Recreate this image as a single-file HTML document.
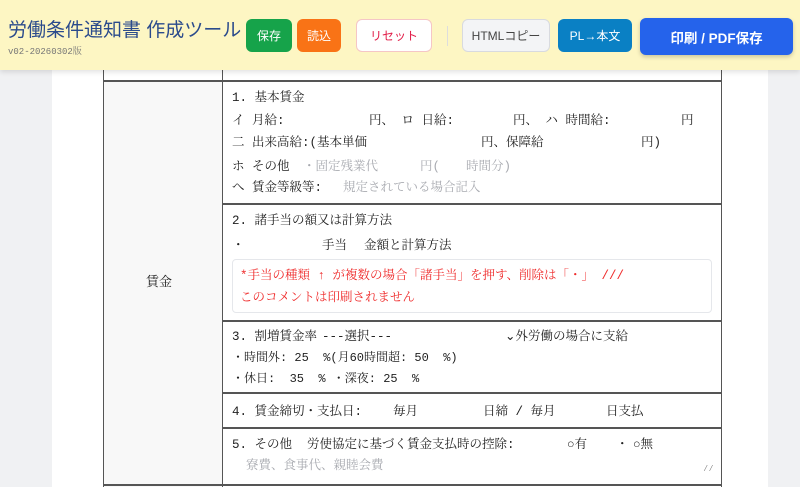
<!DOCTYPE html>
<html><head><meta charset="utf-8"><style>
*{margin:0;padding:0;box-sizing:border-box}
body{width:800px;height:487px;overflow:hidden;background:#f0f1f3;font-family:"Liberation Mono","Noto Serif CJK JP",serif;color:#222;position:relative}
.paper{position:absolute;left:52px;top:0;width:716px;height:487px;background:#fff}
.hdr{position:absolute;left:0;top:0;width:800px;height:70px;background:#fdf6c3;box-shadow:0 2px 5px rgba(0,0,0,.12);z-index:5}
.t{position:absolute;white-space:nowrap}
.btn{position:absolute;border-radius:6px;font-family:"Liberation Sans","Noto Sans CJK JP",sans-serif;font-size:12px;display:flex;align-items:center;justify-content:center;color:#fff}
.v{position:absolute;background:#555;width:1px}
.h{position:absolute;background:#555;height:1px}
.r{position:absolute;font-size:12.5px;white-space:nowrap;line-height:16px;margin-top:2px}
.g{color:#a8aab0}
</style></head><body>
<div class="paper"></div>
<div style="position:absolute;left:104px;top:80px;width:118px;height:407px;background:#f8f8f8"></div>
<div class="v" style="left:103px;top:60px;height:427px"></div>
<div class="v" style="left:222px;top:60px;height:427px"></div>
<div class="v" style="left:721px;top:60px;height:427px"></div>
<div class="h" style="left:103px;top:80px;width:619px;height:2px"></div>
<div class="h" style="left:222px;top:203px;width:500px;height:2px"></div>
<div class="h" style="left:222px;top:320px;width:500px;height:2px"></div>
<div class="h" style="left:222px;top:392px;width:500px;height:2px"></div>
<div class="h" style="left:222px;top:427px;width:500px;height:2px"></div>
<div class="h" style="left:103px;top:484px;width:619px;height:2px"></div>
<div class="r" style="left:146px;top:273px;font-size:13px">賃金</div>

<div class="r" style="left:232px;top:88px">1. 基本賃金</div>
<div class="r" style="left:232px;top:111px">イ 月給:</div>
<div class="r" style="left:369px;top:111px">円、 ロ 日給:</div>
<div class="r" style="left:513px;top:111px">円、 ハ 時間給:</div>
<div class="r" style="left:681px;top:111px">円</div>
<div class="r" style="left:232px;top:133px">二 出来高給:(基本単価</div>
<div class="r" style="left:481px;top:133px">円、保障給</div>
<div class="r" style="left:641px;top:133px">円)</div>
<div class="r" style="left:232px;top:157px">ホ その他</div>
<div class="r g" style="left:303px;top:157px">・固定残業代</div>
<div class="r g" style="left:420px;top:157px">円(</div>
<div class="r g" style="left:466px;top:157px">時間分)</div>
<div class="r" style="left:232px;top:178px">へ 賃金等級等:</div>
<div class="r g" style="left:343px;top:178px">規定されている場合記入</div>

<div class="r" style="left:232px;top:211px">2. 諸手当の額又は計算方法</div>
<div class="r" style="left:232px;top:236px">・</div>
<div class="r" style="left:322px;top:236px">手当</div>
<div class="r" style="left:364px;top:236px">金額と計算方法</div>
<div style="position:absolute;left:232px;top:259px;width:480px;height:54px;border:1px solid #e5e7eb;border-radius:4px;background:#fff"></div>
<div class="r" style="left:240px;top:266px;color:#ef2b2b">*手当の種類 ↑ が複数の場合「諸手当」を押す、削除は「・」 ///</div>
<div class="r" style="left:240px;top:288px;color:#ef2b2b">このコメントは印刷されません</div>

<div class="r" style="left:232px;top:327px">3. 割増賃金率</div>
<div class="r" style="left:322px;top:327px">---選択---</div>
<div class="r" style="left:505px;top:327px">⌄外労働の場合に支給</div>
<div class="r" style="left:232px;top:348px;font-size:12px">・時間外: 25 &nbsp;%(月60時間超: 50 &nbsp;%)</div>
<div class="r" style="left:232px;top:369px;font-size:12px">・休日: &nbsp;35 &nbsp;% ・深夜: 25 &nbsp;%</div>

<div class="r" style="left:232px;top:402px">4. 賃金締切・支払日:</div>
<div class="r" style="left:393px;top:402px">毎月</div>
<div class="r" style="left:483px;top:402px">日締 / 毎月</div>
<div class="r" style="left:606px;top:402px">日支払</div>

<div class="r" style="left:232px;top:435px">5. その他 &nbsp;労使協定に基づく賃金支払時の控除:</div>
<div class="r" style="left:567px;top:435px">○有</div>
<div class="r" style="left:616px;top:435px">・</div>
<div class="r" style="left:633px;top:435px">○無</div>
<div class="r g" style="left:246px;top:456px">寮費、食事代、親睦会費</div>
<div class="r" style="left:703px;top:459px;font-size:9px;color:#666">⁄⁄</div>

<div class="hdr">
<div class="t" style="left:8px;top:15px;font-size:19px;color:#2b4b8c;font-family:'Liberation Sans','Noto Sans CJK JP',sans-serif">労働条件通知書 作成ツール</div>
<div class="t" style="left:8px;top:44px;font-size:9px;color:#777">v02-20260302版</div>
<div class="btn" style="left:246px;top:19px;width:46px;height:33px;background:#16a34a">保存</div>
<div class="btn" style="left:297px;top:19px;width:44px;height:33px;background:#f97316">読込</div>
<div class="btn" style="left:356px;top:19px;width:76px;height:33px;background:#fff;border:1px solid #f5c6c6;color:#e11d48">リセット</div>
<div style="position:absolute;left:447px;top:26px;width:1px;height:20px;background:#ddd"></div>
<div class="btn" style="left:462px;top:19px;width:88px;height:33px;background:#f3f4f6;border:1px solid #d8dadf;color:#444">HTMLコピー</div>
<div class="btn" style="left:558px;top:19px;width:74px;height:33px;background:#0a80c4">PL→本文</div>
<div class="btn" style="left:640px;top:18px;width:153px;height:37px;background:#2563eb;font-weight:bold;font-size:13.5px;box-shadow:0 2px 4px rgba(0,0,0,.2)">印刷 / PDF保存</div>
</div>
</body></html>
